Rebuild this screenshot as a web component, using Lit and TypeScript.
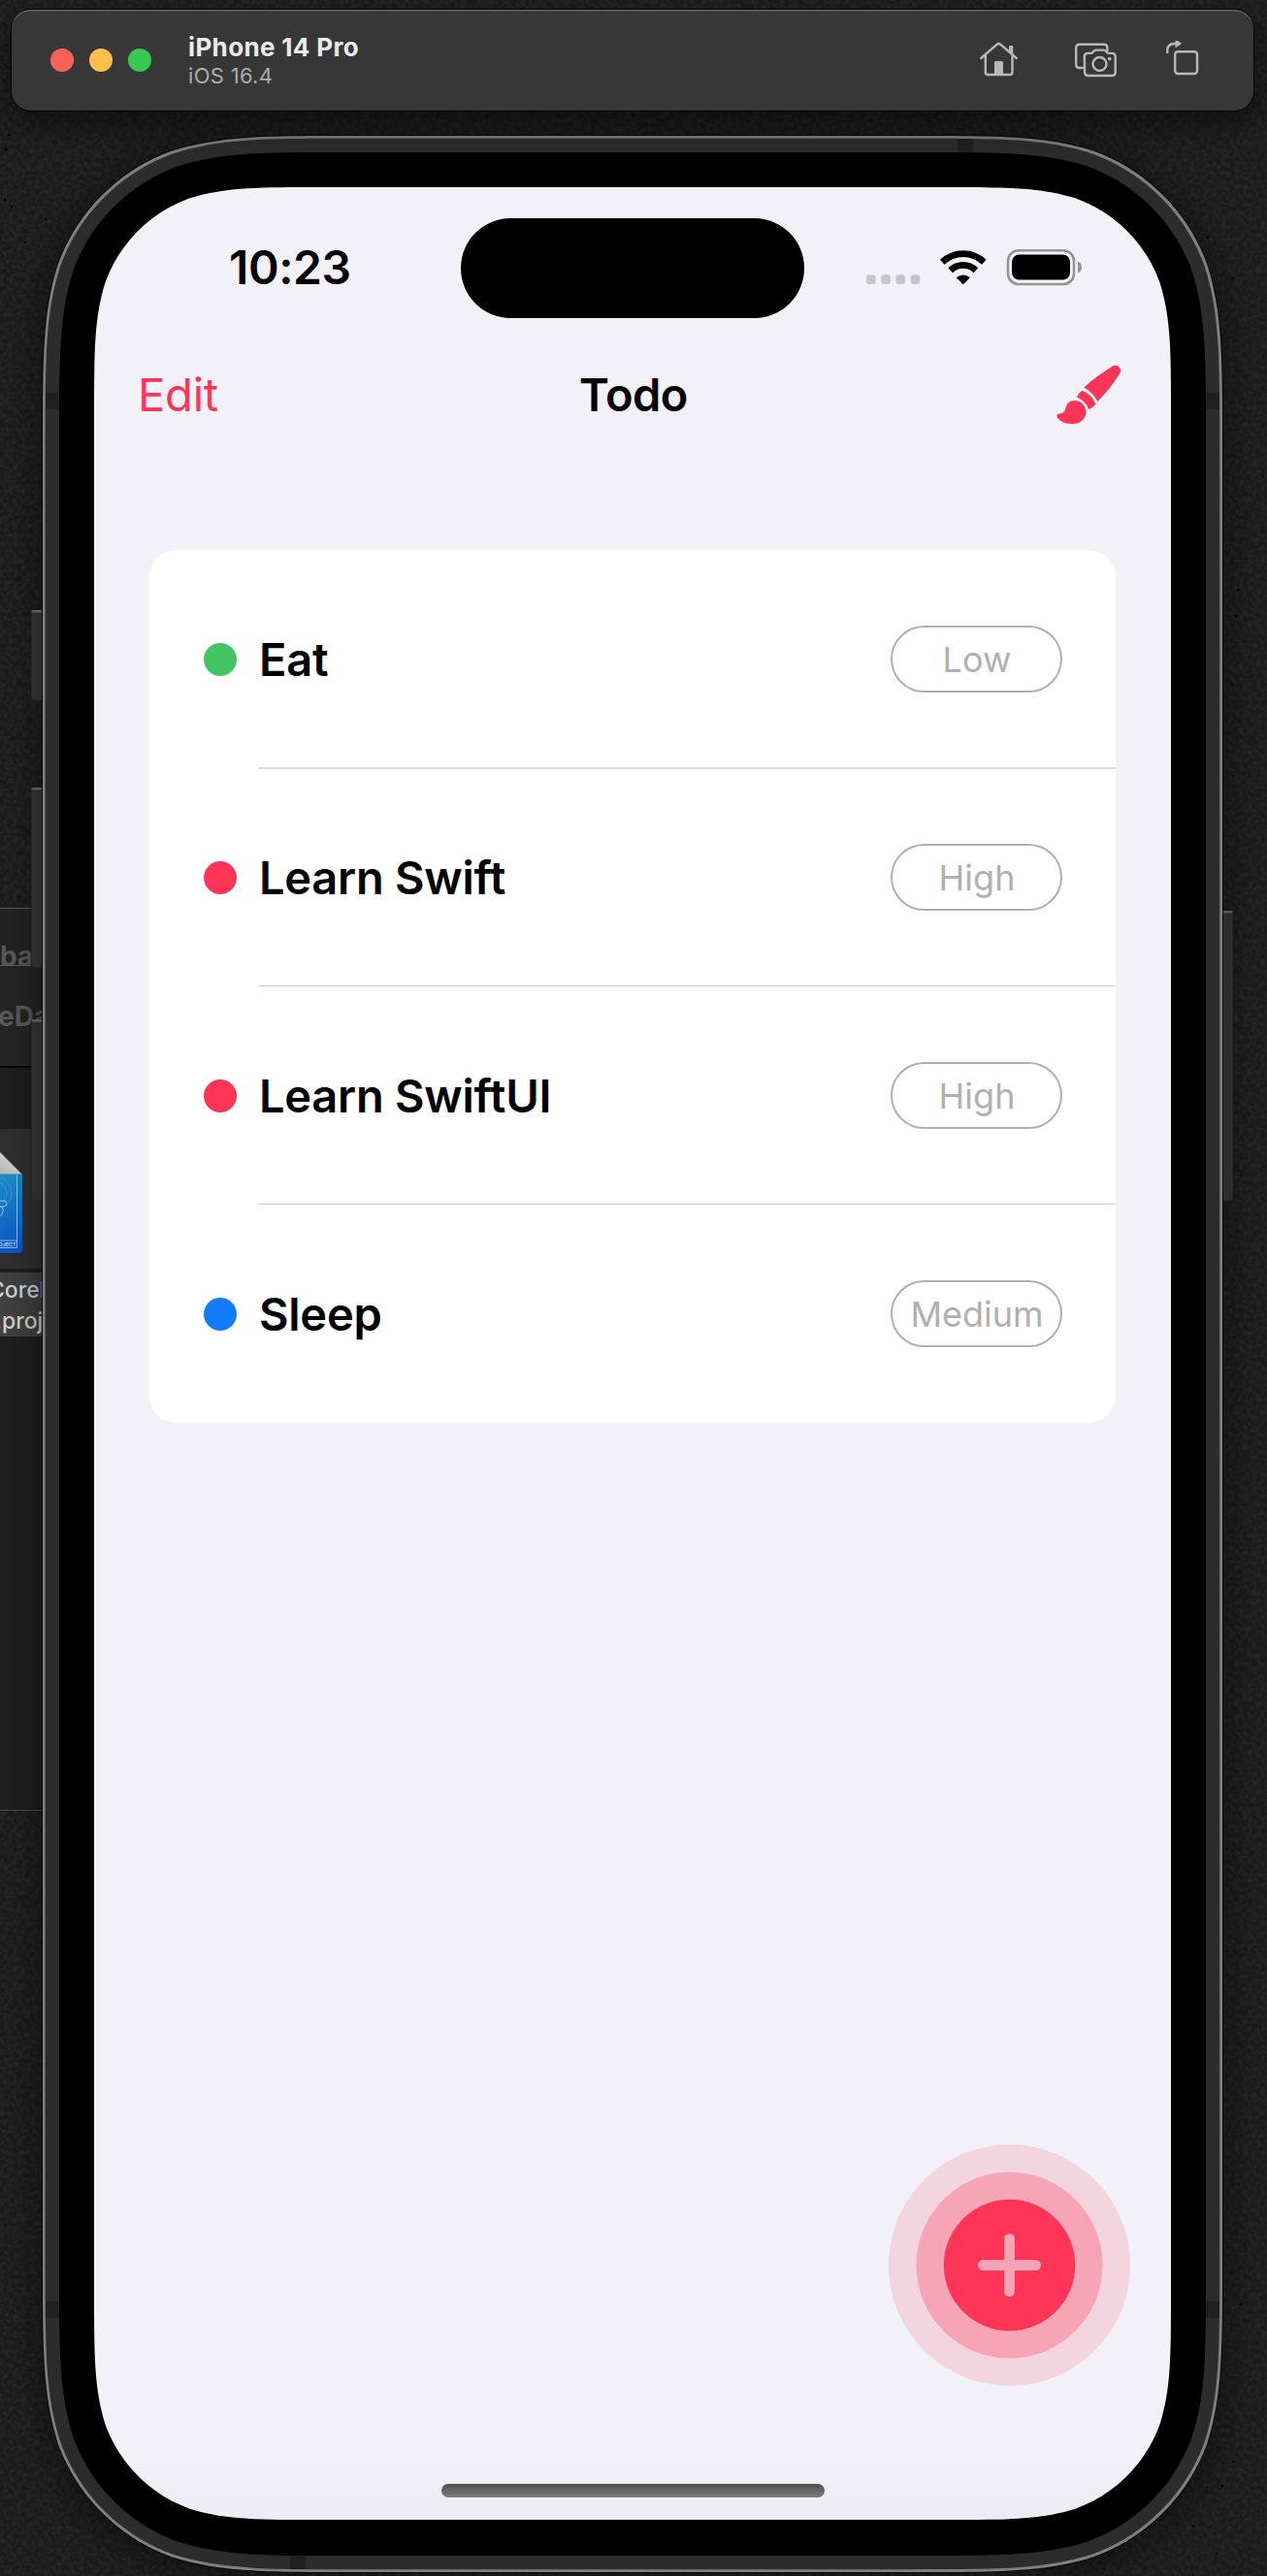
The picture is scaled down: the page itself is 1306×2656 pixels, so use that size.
import { LitElement, html, css, svg } from "lit";
import { customElement, property } from "lit/decorators.js";

/** Rounded rectangle with continuous (curvature-smoothed) corners. */
function smoothRect(x: number, y: number, w: number, h: number, r: number): string {
  const a = 1.52866498 * r, b = 1.08849296 * r, c = 0.86840694 * r, d = 0.63149379 * r;
  const e = 0.07491139 * r, f = 0.37282383 * r, g = 0.16905956 * r;
  const R = x + w, B = y + h;
  return [
    `M${x + a} ${y}H${R - a}`,
    `C${R - b} ${y} ${R - c} ${y} ${R - d} ${y + e}`,
    `C${R - f} ${y + g} ${R - g} ${y + f} ${R - e} ${y + d}`,
    `C${R} ${y + c} ${R} ${y + b} ${R} ${y + a}`,
    `V${B - a}`,
    `C${R} ${B - b} ${R} ${B - c} ${R - e} ${B - d}`,
    `C${R - g} ${B - f} ${R - f} ${B - g} ${R - d} ${B - e}`,
    `C${R - c} ${B} ${R - b} ${B} ${R - a} ${B}`,
    `H${x + a}`,
    `C${x + b} ${B} ${x + c} ${B} ${x + d} ${B - e}`,
    `C${x + f} ${B - g} ${x + g} ${B - f} ${x + e} ${B - d}`,
    `C${x} ${B - c} ${x} ${B - b} ${x} ${B - a}`,
    `V${y + a}`,
    `C${x} ${y + b} ${x} ${y + c} ${x + e} ${y + d}`,
    `C${x + g} ${y + f} ${x + f} ${y + g} ${x + d} ${y + e}`,
    `C${x + c} ${y} ${x + b} ${y} ${x + a} ${y}Z`,
  ].join("");
}

interface Todo {
  title: string;
  priority: "Low" | "Medium" | "High";
}

const TODOS: Todo[] = [
  { title: "Eat", priority: "Low" },
  { title: "Learn Swift", priority: "High" },
  { title: "Learn SwiftUI", priority: "High" },
  { title: "Sleep", priority: "Medium" },
];

@customElement("sim-toolbar")
class SimToolbar extends LitElement {
  static styles = css`
    :host {
      display: flex;
      align-items: center;
      box-sizing: border-box;
      height: 104px;
      padding: 0 56px 0 40px;
      border-radius: 20px;
      background: #373737;
      box-shadow: inset 0 2px 0 -0.5px #636363, 0 0 0 1px #050505, 0 14px 34px rgba(0, 0, 0, 0.55);
      font-family: Inter, "Liberation Sans", sans-serif;
    }
    .lights { display: flex; gap: 16px; }
    .light { width: 24px; height: 24px; border-radius: 50%; }
    .close { background: #ff625a; }
    .min { background: #ffbd4a; }
    .max { background: #38c851; }
    .names { margin-left: 38px; flex: 1; }
    .name { font-size: 26px; line-height: 31px; font-weight: 700; color: #ebebeb; letter-spacing: 0.35px; }
    .os { font-size: 22px; line-height: 27px; padding-top: 1px; color: #acacac; letter-spacing: 0.3px; }
    .icons { display: flex; align-items: center; }
    svg { display: block; fill: none; stroke: #b8b8b8; stroke-width: 2.4; stroke-linejoin: round; stroke-linecap: round; }
    .home { margin-right: 57px; }
    .camera { margin-right: 49px; }
    .solid { fill: #b8b8b8; stroke: none; }
  `;
  render() {
    return html`
      <div class="lights">
        <span class="light close"></span><span class="light min"></span><span class="light max"></span>
      </div>
      <div class="names">
        <div class="name">iPhone 14 Pro</div>
        <div class="os">iOS 16.4</div>
      </div>
      <div class="icons">
        <svg class="home" width="42" height="40" viewBox="1009 41 42 40">
          <path d="M1011.3 59 1027.6 44.8Q1029.5 43.2 1031.4 44.8L1047.8 59" />
          <path d="M1015.8 56v17.6q0 2.4 2.4 2.4h22.900q2.400 0 2.400-2.400V56" />
          <path class="solid" d="M1040 47.2q0-1.3 1.3-1.3h1.700q1.300 0 1.300 1.300v9l-4.300-3.900zM1025 76V63.500q0-1.500 1.500-1.500h6q1.500 0 1.500 1.500V76z" />
        </svg>
        <svg class="camera" width="44" height="40" viewBox="1108 41 44 40">
          <path d="M1116 69h-3.300q-3.500 0-3.500-3.500V48.200q0-3.500 3.500-3.500h25.200q3.500 0 3.500 3.500v3.300" />
          <path d="M1117.800 57.500q0-3.600 3.600-3.600h3.200q1.300 0 2-1l.8-1.100q.9-1.200 2.300-1.200h8q1.400 0 2.300 1.200l.8 1.100q.7 1 2 1h3.300q3.600 0 3.600 3.600v15.900q0 3.600-3.600 3.600h-24.400q-3.600 0-3.600-3.600z" />
          <circle cx="1133.500" cy="65" r="7" />
          <circle class="solid" cx="1143.700" cy="59.600" r="1.900" />
        </svg>
        <svg width="35" height="40" viewBox="1201 41 35 40">
          <rect x="1211.200" y="52.200" width="22.800" height="22.800" rx="3" />
          <path d="M1203.200 53v-1.500q0-7.500 7.500-7.500h2" />
          <path class="solid" d="M1211.500 40.800q0-1.500 1.100-.8l4.700 3.200q.8.600 0 1.200l-4.700 3.400q-1.100.8-1.100-.6z" />
        </svg>
      </div>
    `;
  }
}

@customElement("todo-row")
class TodoRow extends LitElement {
  @property() label = "";
  @property({ reflect: true }) priority = "Low";
  static styles = css`
    :host {
      display: flex;
      align-items: center;
      box-sizing: border-box;
      height: 225px;
      padding: 0 55px 0 56px;
    }
    .dot { width: 34px; height: 34px; border-radius: 50%; background: #43c463; }
    :host([priority="High"]) .dot { background: #fe3557; }
    :host([priority="Medium"]) .dot { background: #127bfb; }
    .label { flex: 1; margin-left: 23px; font-size: 47px; line-height: 60px; font-weight: 600; letter-spacing: -0.25px; white-space: nowrap; }
    .pill {
      box-sizing: border-box;
      width: 177px;
      height: 69px;
      padding-left: 1px;
      border: 2px solid #b0b0b3;
      border-radius: 35px;
      display: flex;
      align-items: center;
      justify-content: center;
      color: #b0b0b4;
      font-size: 36px;
      line-height: 44px;
    }
  `;
  render() {
    return html`<span class="dot"></span><span class="label">${this.label}</span
      ><span class="pill">${this.priority}</span>`;
  }
}

@customElement("app-root")
class AppRoot extends LitElement {
  static styles = css`
    :host {
      display: block;
      position: relative;
      box-sizing: border-box;
      width: 1306px;
      height: 2656px;
      padding: 10px 14px 0 12px;
      overflow: hidden;
      background: #1b1b1b;
      font-family: Inter, "Liberation Sans", sans-serif;
      color: #000;
    }
    .grain, .shell { position: absolute; left: 0; top: 0; display: block; }
    .bar { position: relative; }

    .finder { position: absolute; left: 0; top: 936px; width: 60px; height: 931px; overflow: hidden; background: #1f1f1f; border-bottom: 1px solid #4a4a4a; box-sizing: border-box; }
    .back { height: 59px; border-top: 1px solid #5c5c5c; background: #232323; overflow: hidden; box-sizing: border-box; }
    .head { height: 106px; border-top: 1px solid #5c5c5c; border-bottom: 2px solid #000; background: #252525; box-sizing: border-box; }
    .wtitle { font-weight: 700; font-size: 28px; line-height: 34px; color: #5a5a5a; white-space: nowrap; }
    .back .wtitle { margin: 32px 0 0 0; }
    .head .wtitle { margin: 35px 0 0 -2px; }
    .gap { height: 63px; }
    .tile { height: 144px; background: #303030; }
    .caption { margin-top: 4px; height: 66px; background: #414141; color: #d4d4d4; font-size: 23px; line-height: 32px; white-space: nowrap; font-weight: 500; }
    .c1 { padding-top: 2px; margin-left: -12px; }
    .c2 { margin-left: -5px; }

    .screen {
      position: relative;
      display: flex;
      flex-direction: column;
      width: 1110px;
      height: 2405px;
      margin: 79px 0 0 85px;
    }
    .status { display: grid; grid-template-columns: 378px 354px 378px; padding-top: 32px; height: 103px; }
    .time { margin: 19px 0 0 139px; font-size: 48px; line-height: 64px; font-weight: 600; letter-spacing: -0.4px; }
    .island { border-radius: 52px; background: #000; }
    .signals { display: flex; align-items: flex-start; }
    .signals svg { display: block; margin: 31px 0 0 63px; }

    .nav { display: grid; grid-template-columns: 1fr auto 1fr; align-items: center; height: 80px; margin-top: 39px; padding: 0 45px; font-size: 47px; line-height: 60px; }
    .edit { color: #fe3557; letter-spacing: -0.2px; }
    .title { font-weight: 600; font-size: 47px; letter-spacing: -0.5px; margin-left: 2px; }
    .brush { justify-self: end; display: block; margin-right: 6px; }

    .card { width: 996px; margin: 120px 0 0 57px; border-radius: 28px; background: #fff; }
    .item { position: relative; display: block; }
    .item + .item::before { content: ""; position: absolute; top: -1px; left: 112px; right: 0; height: 1px; background: #cdcdcf; }
    .item:nth-child(2)::before { height: 2px; background: #dededf; }

    .fab { position: absolute; left: 819px; top: 2018px; display: block; }
    .indicator { width: 395px; height: 14px; margin: auto auto 23px 358px; border-radius: 7px; background: linear-gradient(#505051, #7c7c7d); }
  `;

  render() {
    return html`
      <svg class="grain" width="1306" height="2656">
        <filter id="noise" x="0" y="0" width="100%" height="100%">
          <feTurbulence type="fractalNoise" baseFrequency="0.22" numOctaves="2" seed="7" />
          <feColorMatrix values="0 0 0 0 1  0 0 0 0 1  0 0 0 0 1  0.13 0 0 0 -0.045" />
        </filter>
        <rect width="1306" height="2656" filter="url(#noise)" />
        ${[[5, 206], [12, 213], [47, 226], [26, 250], [9, 139], [6, 154], [1271, 287], [1245, 245], [1276, 608], [1274, 635], [1270, 705], [1279, 2376], [1271, 2538], [1260, 2563], [1230, 2605], [1254, 2633]].map(
          ([x, y]) => svg`<circle cx=${x} cy=${y} r="1.300" fill="#000" />`
        )}
      </svg>

      <div class="finder">
        <div class="back"><div class="wtitle">ba</div></div>
        <div class="head"><div class="wtitle">eDa</div></div>
        <div class="gap"></div>
        <div class="tile">
          <svg width="46" height="144" viewBox="0 0 46 144">
            <defs>
              <linearGradient id="blue" x2="0" y2="1"><stop stop-color="#1b8fc8" /><stop offset="1" stop-color="#0d56cc" /></linearGradient>
              <linearGradient id="fold" x1="1" y1="0" x2="0" y2="1"><stop stop-color="#f0f0f0" /><stop offset="1" stop-color="#b4b4b4" /></linearGradient>
            </defs>
            <path d="M0 46H23V124q0 4-4 4H0z" fill="url(#blue)" />
            <path d="M0 24 22.500 46.500H0z" fill="url(#fold)" />
            <g fill="none" stroke="#8fc3ee" stroke-width="1">
              <circle cx="-4" cy="66" r="11" opacity=".35" /><circle cx="-4" cy="66" r="16" opacity=".3" />
              <path d="M17.500 47V122.500H0M0 115H17.500" />
              <path d="M0 74H4q3 0 3 3t-3 3H0M0 80q4 1 3 5t-3 5" />
            </g>
            <text x="-1.500" y="121" font-size="5.400" font-weight="700" fill="#b4d4f4" font-family="Inter, sans-serif">OJECT</text>
          </svg>
        </div>
        <div class="caption"><div class="c1">CoreD</div><div class="c2">.proj</div></div>
      </div>

      <svg class="shell" width="1306" height="2656">
        <defs>
          <filter id="soft" x="-10%" y="-10%" width="120%" height="120%"><feGaussianBlur stdDeviation="22" /></filter>
          <linearGradient id="wall" x2="0" y2="1"><stop offset=".97" stop-color="#f2f1f7" /><stop offset="1" stop-color="#edecf2" /></linearGradient>
        </defs>
        <path d=${smoothRect(42, 146, 1220, 2512, 205)} fill="#000" opacity=".5" filter="url(#soft)" />
        ${[[32, 629, 93], [32, 812, 186], [32, 1051, 187], [1255, 939, 299]].map(
          ([x, y, h]) => svg`
            <rect x=${x} y=${y} width="16" height=${h} rx="3" fill="#2d2d2d" stroke="#1a1a1a" stroke-width=".6" />
            <rect x=${x + 0.5} y=${y} width="15" height="2.500" rx="1.200" fill="#5c5c5c" />`
        )}
        <path d=${smoothRect(43, 139, 1218, 2514, 211)} fill="#0a0a0a" />
        <path d=${smoothRect(44, 140, 1216, 2512, 210)} fill="#7f7f7f" />
        <path d=${smoothRect(46.6, 142.8, 1210.6, 2506.4, 208)} fill="#2c2c2c" />
        <g fill="#202020">
          <rect x="987" y="143" width="16" height="14" /><rect x="299" y="2635" width="16" height="14" />
          <rect x="47" y="405" width="14" height="17" /><rect x="1243" y="405" width="14" height="17" />
          <rect x="47" y="2373" width="14" height="17" /><rect x="1243" y="2373" width="14" height="17" />
        </g>
        <path d=${smoothRect(61, 157, 1182, 2478, 193)} fill="#000" />
        <path d=${smoothRect(97, 193, 1110, 2405, 155)} fill="url(#wall)" />
      </svg>

      <sim-toolbar class="bar"></sim-toolbar>

      <div class="screen">
        <div class="status">
          <div class="time">10:23</div>
          <div class="island"></div>
          <div class="signals">
            <svg width="225" height="40" viewBox="892 256 225 40">
              <g fill="#c5c5ca">
                <rect x="893" y="283.300" width="9.600" height="9.600" rx="3" /><rect x="908.200" y="283.300" width="9.600" height="9.600" rx="3" />
                <rect x="923.400" y="283.300" width="9.600" height="9.600" rx="3" /><rect x="938.700" y="283.300" width="9.600" height="9.600" rx="3" />
              </g>
              <g fill="none" stroke="#000" stroke-width="6.800">
                <path d="M971.300 270.200A31 31 0 0 1 1014.300 270.200" />
                <path d="M979.700 278.700A19 19 0 0 1 1005.900 278.700" />
              </g>
              <path d="M985.700 286.300A10.500 10.500 0 0 1 999.900 286.300L993.700 292.500Q992.800 293.300 991.900 292.500Z" />
              <rect x="1039" y="258.200" width="68" height="34.800" rx="11" fill="none" stroke="#949497" stroke-width="2.600" />
              <rect x="1043" y="262.500" width="60" height="26" rx="7.500" />
              <path d="M1111 269.500q4 1.500 4 6t-4 6z" fill="#949497" />
            </svg>
          </div>
        </div>

        <div class="nav">
          <span class="edit">Edit</span>
          <span class="title">Todo</span>
          <svg class="brush" width="68" height="64" viewBox="1088 375 68 64" fill="#fe3557">
            <path d="M1117.300 399.500C1126 391.500 1136 384.500 1146.800 377.600Q1151 375.500 1153.800 378.500Q1156.300 381.700 1154 385.600C1147 396.500 1139.500 406 1131.300 414Q1126.500 404.500 1117.300 399.500Z" />
            <path d="M1115.300 402.700Q1125.500 406.500 1129.300 416.400Q1126.500 420.800 1122 421.800Q1118.800 413 1110 409.800Q1111.500 405 1115.300 402.700Z" />
            <path d="M1107.500 413C1115 413 1119.300 419 1119.300 425C1119.300 432.500 1113 437 1105 437C1097 437 1091 433.500 1089.500 429.500Q1088.800 427.200 1091 426.800C1096 426 1098 424 1098.500 420.500C1099.500 416 1102.500 413 1107.500 413Z" />
          </svg>
        </div>

        <div class="card">
          ${TODOS.map(
            (t) => html`<div class="item"><todo-row .label=${t.title} .priority=${t.priority}></todo-row></div>`
          )}
        </div>

        <div class="indicator"></div>

        <svg class="fab" width="249" height="249" viewBox="-124.500 -124.500 249 249">
          <circle r="124.500" fill="#f3d5df" /><circle r="96" fill="#f7a4b6" /><circle r="67.700" fill="#fe3557" />
          <path d="M-27 0H27M0-27V27" stroke="#f7a4b6" stroke-width="11" stroke-linecap="round" />
        </svg>
      </div>
    `;
  }
}
